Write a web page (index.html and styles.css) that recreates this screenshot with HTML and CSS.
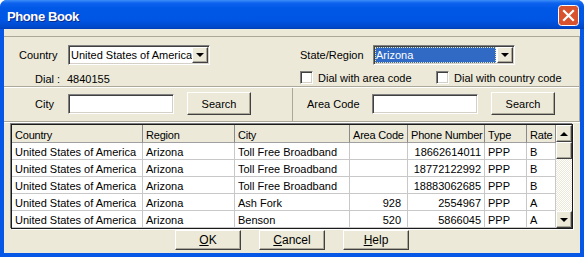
FILE: index.html
```html
<!DOCTYPE html>
<html lang="en">
<head>
    <meta charset="UTF-8">
    <title>Phone Book</title>
    <link rel="stylesheet" href="styles.css">
</head>
<body>
<div class="window">
    <div class="titlebar">
        <span class="title">Phone Book</span>
        <span class="close">
            <svg width="21" height="21" viewBox="0 0 21 21">
                <rect x="0.5" y="0.5" width="20" height="20" rx="3" fill="#d9522e" stroke="#fff"/>
                <path d="M6 6 L15 15 M15 6 L6 15" stroke="#fff" stroke-width="2.2" stroke-linecap="square"/>
            </svg>
        </span>
    </div>
    <div class="client">
        <div class="panel">
            <div class="section top">
                <div class="half left">
                    <div class="row r1">
                        <span class="lbl country-lbl">Country</span>
                        <div class="combo">
                            <span class="combo-text">United States of America</span>
                            <span class="drop"><span class="arrow down"></span></span>
                        </div>
                    </div>
                    <div class="row r2">
                        <span class="lbl dial-lbl">Dial :</span>
                        <span>4840155</span>
                    </div>
                </div>
                <div class="half right">
                    <div class="row r1">
                        <span class="lbl region-lbl">State/Region</span>
                        <div class="combo">
                            <span class="combo-text selected"><span class="focus">Arizona</span></span>
                            <span class="drop"><span class="arrow down"></span></span>
                        </div>
                    </div>
                    <div class="row r2">
                        <label class="check first"><span class="box"></span>Dial with area code</label>
                        <label class="check"><span class="box"></span>Dial with country code</label>
                    </div>
                </div>
            </div>
            <div class="section search">
                <div class="half left">
                    <span class="lbl city-lbl">City</span>
                    <span class="edit"></span>
                    <button class="btn search-btn">Search</button>
                </div>
                <div class="half right">
                    <span class="lbl area-lbl">Area Code</span>
                    <span class="edit"></span>
                    <button class="btn search-btn">Search</button>
                </div>
            </div>
        </div>

        <div class="list">
            <div class="grid">
                <div class="tr head">
                    <div class="td">Country</div>
                    <div class="td">Region</div>
                    <div class="td">City</div>
                    <div class="td">Area Code</div>
                    <div class="td">Phone Number</div>
                    <div class="td">Type</div>
                    <div class="td">Rate</div>
                </div>
                <div class="tr">
                    <div class="td">United States of America</div>
                    <div class="td">Arizona</div>
                    <div class="td">Toll Free Broadband</div>
                    <div class="td num area"></div>
                    <div class="td num">18662614011</div>
                    <div class="td">PPP</div>
                    <div class="td">B</div>
                </div>
                <div class="tr">
                    <div class="td">United States of America</div>
                    <div class="td">Arizona</div>
                    <div class="td">Toll Free Broadband</div>
                    <div class="td num area"></div>
                    <div class="td num">18772122992</div>
                    <div class="td">PPP</div>
                    <div class="td">B</div>
                </div>
                <div class="tr">
                    <div class="td">United States of America</div>
                    <div class="td">Arizona</div>
                    <div class="td">Toll Free Broadband</div>
                    <div class="td num area"></div>
                    <div class="td num">18883062685</div>
                    <div class="td">PPP</div>
                    <div class="td">B</div>
                </div>
                <div class="tr">
                    <div class="td">United States of America</div>
                    <div class="td">Arizona</div>
                    <div class="td">Ash Fork</div>
                    <div class="td num area">928</div>
                    <div class="td num">2554967</div>
                    <div class="td">PPP</div>
                    <div class="td">A</div>
                </div>
                <div class="tr">
                    <div class="td">United States of America</div>
                    <div class="td">Arizona</div>
                    <div class="td">Benson</div>
                    <div class="td num area">520</div>
                    <div class="td num">5866045</div>
                    <div class="td">PPP</div>
                    <div class="td">A</div>
                </div>
            </div>
            <div class="scrollbar">
                <span class="sb-btn"><span class="arrow up"></span></span>
                <span class="sb-btn thumb"></span>
                <span class="track"></span>
                <span class="sb-btn"><span class="arrow down"></span></span>
            </div>
        </div>

        <div class="buttons">
            <button class="btn dlg-btn"><u>O</u>K</button>
            <button class="btn dlg-btn"><u>C</u>ancel</button>
            <button class="btn dlg-btn"><u>H</u>elp</button>
        </div>
    </div>
</div>
</body>
</html>
```

FILE: styles.css
```css
body {
    margin: 0;
    background: #fff;
    font-family: "Liberation Sans", Arial, sans-serif;
    font-size: 11px;
    color: #000;
}
.window {
    width: 584px;
    height: 257px;
    background: #0757e6;
    border-radius: 7px 7px 0 0;
    overflow: hidden;
    display: flex;
    flex-direction: column;
}
.titlebar {
    height: 29px;
    box-sizing: border-box;
    padding: 5px 5px 0 7px;
    display: flex;
    align-items: flex-start;
    background: linear-gradient(#3d8ff7 0, #0e63ee 3px, #0058e6 8px, #0055e4 20px, #0049cc 27px, #003fb8 29px);
}
.title {
    margin-top: 4px;
    line-height: 15px;
    font-size: 13px;
    font-weight: bold;
    letter-spacing: -0.4px;
    color: #fff;
    text-shadow: 1px 1px #0a2a8a;
}
.close {
    margin-left: auto;
    width: 21px;
    height: 21px;
}
.close svg {
    display: block;
}
.client {
    margin: 0 4px 0 4px;
    height: 224px;
    background: #ece9d8;
    display: flex;
    flex-direction: column;
}
.panel {
    margin-top: 7px;
    border-top: 1px solid #aca899;
    border-right: 1px solid #aca899;
    box-shadow: 0 1px #fff;
}
.section {
    display: flex;
}
.section.top {
    height: 50px;
    box-sizing: border-box;
    border-bottom: 1px solid #aca899;
}
.section.search {
    height: 35px;
    box-sizing: border-box;
    border-top: 1px solid #fff;
    border-bottom: 1px solid #aca899;
}
.half {
    box-sizing: border-box;
}
.half.left {
    width: 289px;
}
.section.search .half.left {
    border-right: 1px solid #aca899;
}
.half.right {
    flex: 1;
}
.section.top .half {
    padding-top: 8px;
}
.section.top .half.left {
    padding-left: 15px;
}
.section.top .half.right {
    padding-left: 6px;
    border-left: 1px solid transparent;
}
.row {
    display: flex;
    align-items: center;
}
.r1 {
    height: 20px;
}
.r2 {
    height: 13px;
    margin-top: 6px;
}
.country-lbl {
    width: 49px;
}
.dial-lbl {
    width: 32px;
    padding-left: 16px;
}
.r2 > span {
    margin-top: 2px;
}
.region-lbl {
    width: 73px;
}
.combo {
    width: 142px;
    height: 20px;
    box-sizing: border-box;
    background: #fff;
    border: 1px solid;
    border-color: #808080 #fff #fff #808080;
    box-shadow: inset 1px 1px #404040, inset -1px -1px #d4d0c8;
    padding: 1px;
    display: flex;
}
.combo-text {
    flex: 1;
    line-height: 16px;
    padding-left: 1px;
    white-space: nowrap;
    overflow: hidden;
}
.combo-text.selected {
    background: #316ac5;
    color: #fff;
    margin-right: 1px;
    padding: 0;
    display: flex;
}
.focus {
    flex: 1;
    border: 1px dotted #e8e4a8;
    line-height: 14px;
}
.drop {
    width: 16px;
    height: 16px;
    box-sizing: border-box;
    background: #ece9d8;
    border: 1px solid;
    border-color: #fff #404040 #404040 #fff;
    box-shadow: inset -1px -1px #aca899;
    display: flex;
    align-items: center;
    justify-content: center;
}
.arrow {
    width: 0;
    height: 0;
    border-left: 4px solid transparent;
    border-right: 4px solid transparent;
}
.arrow.down {
    border-top: 4px solid #000;
}
.arrow.up {
    border-bottom: 4px solid #000;
}
.check {
    display: flex;
    align-items: center;
}
.check.first {
    width: 136px;
}
.box {
    width: 13px;
    height: 13px;
    box-sizing: border-box;
    background: #fff;
    border: 1px solid;
    border-color: #808080 #fff #fff #808080;
    box-shadow: inset 1px 1px #404040, inset -1px -1px #d4d0c8;
    margin-right: 5px;
}
.section.search .half {
    display: flex;
    align-items: center;
    padding-top: 4px;
    height: 33px;
    padding-bottom: 6px;
}
.city-lbl {
    width: 33px;
    padding-left: 31px;
}
.area-lbl {
    width: 65px;
    padding-left: 14px;
}
.edit {
    width: 106px;
    height: 20px;
    box-sizing: border-box;
    background: #fff;
    border: 1px solid;
    border-color: #808080 #fff #fff #808080;
    box-shadow: inset 1px 1px #404040, inset -1px -1px #d4d0c8;
}
.btn {
    font-family: "Liberation Sans", Arial, sans-serif;
    font-size: 11px;
    color: #000;
    background: #ece9d8;
    border: 1px solid;
    border-color: #fff #404040 #404040 #fff;
    box-shadow: inset -1px -1px #aca899;
    padding: 0;
    box-sizing: border-box;
}
.search-btn {
    width: 64px;
    height: 23px;
    margin-left: 13px;
}
.list {
    margin: 2px 0 0 7px;
    width: 562px;
    height: 105px;
    box-sizing: border-box;
    border: 1px solid #1a1a1a;
    box-shadow: -1px -1px 0 #808080, 1px 1px 0 #fff;
    background: #fff;
    display: flex;
}
.grid {
    width: 544px;
}
.tr {
    display: grid;
    grid-template-columns: 131px 92px 115px 58px 77px 42px 29px;
    height: 17px;
}
.td {
    box-sizing: border-box;
    border-right: 1px solid #c8c8c8;
    border-bottom: 1px solid #c8c8c8;
    padding: 2px 0 0 3px;
    line-height: 14px;
    white-space: nowrap;
    overflow: hidden;
}
.tr.head {
    height: 18px;
    background: #ece9d8;
    letter-spacing: -0.2px;
}
.tr.head .td {
    border-right-color: #8a8a8a;
    border-bottom-color: #a0a0a0;
    padding-top: 3px;
    padding-left: 3px;
}
.td.num {
    text-align: right;
    padding-left: 0;
    padding-right: 3px;
}
.td.area {
    padding-right: 6px;
}
.scrollbar {
    width: 16px;
    display: flex;
    flex-direction: column;
}
.sb-btn {
    height: 17px;
    box-sizing: border-box;
    background: #ece9d8;
    border: 1px solid;
    border-color: #fff #404040 #404040 #fff;
    box-shadow: inset -1px -1px #aca899;
    display: flex;
    align-items: center;
    justify-content: center;
}
.track {
    flex: 1;
    background: repeating-conic-gradient(#fff 0 25%, #ece9d8 0 50%) 0 0 / 2px 2px;
}
.buttons {
    display: flex;
    justify-content: center;
    gap: 18px;
    margin-top: 1px;
}
.dlg-btn {
    width: 66px;
    height: 20px;
    font-size: 12px;
}
```
